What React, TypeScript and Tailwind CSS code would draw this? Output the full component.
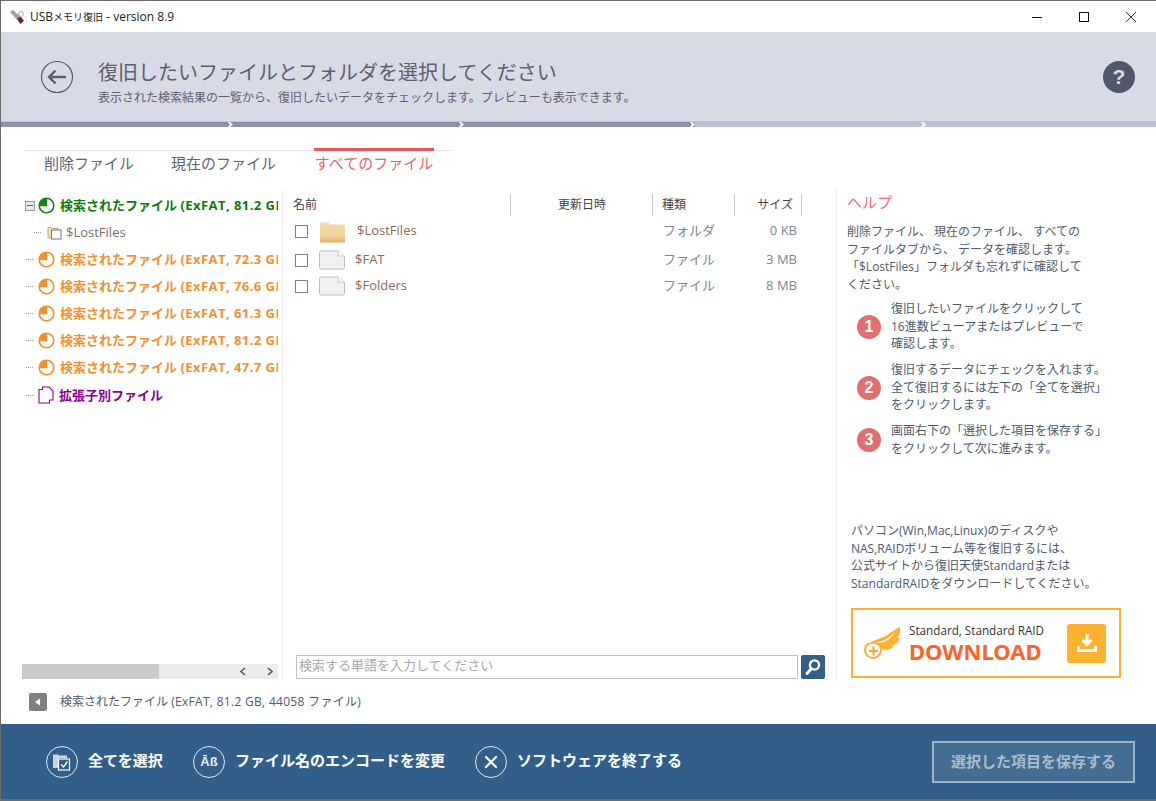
import React from "react";

const FONT = '"Open Sans","Noto Sans CJK JP",sans-serif';

function Pie({ color }: { color: string }) {
  return (
    <svg width="17" height="17" viewBox="0 0 17 17" className="shrink-0">
      <circle cx="8.5" cy="8.5" r="7.3" fill="none" stroke={color} strokeWidth="1.6" />
      <path d="M9.2 9.2V1.2H8.5A7.3 7.3 0 0 0 1.2 8.5V9.2Z" fill={color} />
    </svg>
  );
}

function Dots() {
  return <span className="w-[7px] h-px shrink-0 border-t border-dotted border-[#999]" />;
}

function TreeLabel({ size, color }: { size: string; color: string }) {
  return (
    <span className="font-bold text-[13px] leading-[27px]" style={{ color }}>
      検索されたファイル <span className="tracking-[0.45px]">(ExFAT, {size} GB</span>
    </span>
  );
}

function TreeRow({ size, color }: { size: string; color: string }) {
  return (
    <div className="h-[27px] flex items-center whitespace-nowrap">
      <span className="w-[16px] shrink-0 flex pl-[4px]"><Dots /></span>
      <span className="mr-[5px] flex"><Pie color={color} /></span>
      <TreeLabel size={size} color={color} />
    </div>
  );
}

function Check() {
  return <span className="w-[13px] h-[13px] shrink-0 border border-[#6f8296] bg-white" />;
}

function FileIcon() {
  return (
    <svg width="28" height="20" viewBox="0 0 28 20" className="shrink-0">
      <path d="M1.5 2.5A1.5 1.5 0 0 1 3 1H20L26.5 6V17.5A1.5 1.5 0 0 1 25 19H3A1.5 1.5 0 0 1 1.5 17.5Z" fill="#f1f1f1" stroke="#bdbdbd" />
      <path d="M20 1V6H26.5" fill="#fafafa" stroke="#c8c8c8" />
    </svg>
  );
}

function FolderIcon() {
  return (
    <svg width="27" height="22" viewBox="0 0 27 22" className="shrink-0">
      <defs>
        <linearGradient id="fg" x1="0" y1="0" x2="0" y2="1">
          <stop offset="0" stopColor="#f3dcae" />
          <stop offset="0.7" stopColor="#efd198" />
          <stop offset="1" stopColor="#e3ae58" />
        </linearGradient>
      </defs>
      <path d="M1 3.5C1 2 1.8 1.2 3 1.2H9L11 3.4H24.5C25.6 3.4 26 4 26 5V20C26 21 25.6 21.6 24.5 21.6H2.5C1.5 21.6 1 21 1 20Z" fill="url(#fg)" />
    </svg>
  );
}

function FileRow({ name, type, size, h, folder }: { name: string; type: string; size: string; h: string; folder?: boolean }) {
  const shift = folder ? "-mt-[2px]" : "";
  return (
    <div className={`flex items-center text-[13px] ${h}`}>
      <span className="w-[12px] shrink-0" />
      <Check />
      {folder ? (
        <span className="ml-[11px] mr-[11px] flex"><FolderIcon /></span>
      ) : (
        <span className="ml-[10px] mr-[9px] flex"><FileIcon /></span>
      )}
      <span className={`${folder ? "w-[306px]" : "w-[308px]"} shrink-0 text-[#8a6a55] ${shift}`}>{name}</span>
      <span className={`w-[76px] shrink-0 text-[#7c8694] text-[13px] ${shift}`}>{type}</span>
      <span className={`w-[58px] shrink-0 text-right text-[#7c8694] text-[13px] ${shift}`}>{size}</span>
    </div>
  );
}

function Step({ n, lines, h }: { n: number; lines: string[]; h: string }) {
  return (
    <div className={`flex items-center ${h}`}>
      <span className="w-[24px] h-[24px] ml-[10px] mr-[10px] shrink-0 rounded-full bg-[#e07070] text-white font-bold text-[16px] leading-[24px] text-center" style={{ fontFamily: '"Liberation Sans",sans-serif' }}>{n}</span>
      <div className="text-[12px] leading-[17.5px] text-[#4d5b6c] whitespace-nowrap">
        {lines.map((l) => <div key={l}>{l}</div>)}
      </div>
    </div>
  );
}

function RoundIcon({ children }: { children: React.ReactNode }) {
  return (
    <span className="w-[32px] h-[32px] shrink-0 rounded-full border border-[#dfe7ee] flex items-center justify-center">
      {children}
    </span>
  );
}

function Seg({ w, bg, chevron }: { w: string; bg: string; chevron?: boolean }) {
  return (
    <div className={`${w} ${bg} flex items-center justify-end`}>
      {chevron && (
        <svg width="5" height="5" viewBox="0 0 5 5"><path d="M0 0L2 0L5 2.5L2 5L0 5L2 2.5Z" fill="#fff" /></svg>
      )}
    </div>
  );
}

export default function App() {
  return (
    <div className="w-[1156px] h-[801px] bg-white flex flex-col overflow-hidden border-t-[1px] border-l-[1px] border-[#6b6b6b]" style={{ fontFamily: FONT }}>
      {/* title bar */}
      <div className="h-[31px] shrink-0 flex items-center">
        <svg width="16" height="16" viewBox="0 0 16 16" className="ml-[8px] mr-[5px] shrink-0">
          <path d="M1 3L4 1L13 9L10 13Z" fill="#9aa0a8" />
          <path d="M8 9L12 8L15 12L11 15Z" fill="#7a1d2a" />
          <circle cx="12" cy="5" r="2.4" fill="none" stroke="#aaa" />
        </svg>
        <span className="text-[12px] text-[#222] whitespace-nowrap">USB<span className="text-[10px]">メモリ復旧</span> - version 8.9</span>
        <div className="flex-1" />
        <div className="flex items-center gap-[37px] pr-[20px]">
          <svg width="10" height="10" viewBox="0 0 10 10"><path d="M0 5.5H10" stroke="#111" /></svg>
          <svg width="10" height="10" viewBox="0 0 10 10"><rect x="0.5" y="0.5" width="9" height="9" fill="none" stroke="#111" /></svg>
          <svg width="10" height="10" viewBox="0 0 10 10"><path d="M0 0L10 10M10 0L0 10" stroke="#111" strokeWidth="0.9" /></svg>
        </div>
      </div>

      {/* header */}
      <div className="h-[89px] shrink-0 bg-[#d8dae6] flex items-center">
        <svg width="34" height="34" viewBox="0 0 34 34" className="ml-[39px] mr-[24px] shrink-0">
          <circle cx="17" cy="17" r="15.5" fill="none" stroke="#5a5d6e" strokeWidth="1.2" />
          <path d="M26 17H9M15.5 10.5L9 17L15.5 23.5" fill="none" stroke="#5a5d6e" strokeWidth="2.4" />
        </svg>
        <div className="flex-1 mt-[10px]">
          <div className="text-[20px] leading-[29px] text-[#5d6070] whitespace-nowrap">復旧したいファイルとフォルダを選択してください</div>
          <div className="mt-[2px] text-[12px] leading-[17px] text-[#5d6070] whitespace-nowrap">表示された検索結果の一覧から、復旧したいデータをチェックします。プレビューも表示できます。</div>
        </div>
        <span className="w-[32px] h-[32px] mr-[21px] rounded-full bg-[#52566b] text-[#d8dae6] font-bold text-[21px] leading-[32px] text-center" style={{ fontFamily: '"Liberation Sans",sans-serif' }}>?</span>
      </div>

      {/* progress */}
      <div className="h-[6px] shrink-0 flex border-t border-[#c4c4cc]">
        <Seg w="w-[232px]" bg="bg-[#8e8fa8]" chevron />
        <Seg w="w-[231px]" bg="bg-[#8e8fa8]" chevron />
        <Seg w="w-[231px]" bg="bg-[#8e8fa8]" chevron />
        <Seg w="w-[231px]" bg="bg-[#bfc0d3]" chevron />
        <Seg w="flex-1" bg="bg-[#bfc0d3]" />
      </div>

      {/* tabs */}
      <div className="h-[62px] shrink-0 pl-[23px] pt-[21px]">
        <div className="w-[429px] h-[41px] flex relative">
          <div className="absolute left-0 right-0 top-[2px] h-px bg-[#e6e6e6]" />
          <div className="w-[147px] pl-[20px] pt-[4px] text-[15px] leading-[22px] text-[#5d6673] whitespace-nowrap">削除ファイル</div>
          <div className="w-[143px] pt-[4px] text-[15px] leading-[22px] text-[#5d6673] whitespace-nowrap">現在のファイル</div>
          <div className="w-[120px] relative border-t-[3px] border-[#e05c5c] pt-[1px] text-[15px] leading-[22px] text-[#e06565] text-center whitespace-nowrap">すべてのファイル</div>
        </div>
      </div>

      {/* panels */}
      <div className="h-[490px] shrink-0 flex">
        {/* tree */}
        <div className="w-[282px] shrink-0 pl-[21px] pr-[4px] pt-[3px] border-r border-[#ececec] flex flex-col">
          <div className="flex-1 overflow-hidden">
            <div className="h-[27px] flex items-center whitespace-nowrap">
              <span className="w-[16px] shrink-0 flex">
                <span className="w-[10px] h-[10px] ml-[3px] border border-[#9a9a9a] bg-[#e8e8ee] flex items-center justify-center">
                  <span className="w-[6px] h-px bg-[#3a5a9a]" />
                </span>
              </span>
              <span className="mr-[5px] flex"><Pie color="#148214" /></span>
              <TreeLabel size="81.2" color="#0e7a0e" />
            </div>
            <div className="h-[27px] flex items-center whitespace-nowrap">
              <span className="w-[12px] shrink-0" />
              <span className="w-[13px] shrink-0 flex"><Dots /></span>
              <svg width="15" height="15" viewBox="0 0 15 15" className="mr-[4px] shrink-0">
                <path d="M1 2.5H4.5L5.5 3.5H11V6H5V13H1Z" fill="#f2e2bd" stroke="#c5a866" />
                <rect x="4.5" y="5" width="9.5" height="9" fill="#fff" stroke="#66788c" />
              </svg>
              <span className="text-[13px] text-[#77706e]">$LostFiles</span>
            </div>
            {["72.3", "76.6", "61.3", "81.2", "47.7"].map((s, i) => (
              <TreeRow key={i} color="#f0902f" size={s} />
            ))}
            <div className="h-[28px] flex items-center whitespace-nowrap">
              <span className="w-[16px] shrink-0 flex pl-[4px]"><Dots /></span>
              <svg width="16" height="18" viewBox="0 0 16 18" className="mr-[5px] shrink-0">
                <path d="M4.5 1H11L15 5V14H4.5Z" fill="#fff" stroke="#8c008c" strokeWidth="1.1" />
                <path d="M4.5 3.5H1V17H11.5V14" fill="#fff" stroke="#8c008c" strokeWidth="1.1" />
              </svg>
              <span className="font-bold text-[13px] text-[#8c008c] leading-[27px]">拡張子別ファイル</span>
            </div>
          </div>
          <div className="h-[15px] shrink-0 bg-[#ececec] flex items-center">
            <div className="w-[137px] h-full bg-[#cbcbcb]" />
            <div className="flex-1" />
            <svg width="8" height="9" viewBox="0 0 8 9" className="mr-[19px]"><path d="M6 1L2 4.5L6 8" fill="none" stroke="#555" strokeWidth="1.6" /></svg>
            <svg width="8" height="9" viewBox="0 0 8 9" className="mr-[4px]"><path d="M2 1L6 4.5L2 8" fill="none" stroke="#555" strokeWidth="1.6" /></svg>
          </div>
        </div>

        {/* file list */}
        <div className="w-[554px] shrink-0 pt-[4px] border-r border-[#ececec] flex flex-col">
          <div className="h-[24px] shrink-0 flex items-center text-[12px] text-[#444]">
            <div className="w-[228px] h-[22px] pl-[10px] border-r border-[#c8c8c8] leading-[22px]">名前</div>
            <div className="w-[142px] h-[22px] pl-[47px] border-r border-[#c8c8c8] leading-[22px]">更新日時</div>
            <div className="w-[82px] h-[22px] pl-[9px] border-r border-[#c8c8c8] leading-[22px]">種類</div>
            <div className="w-[67px] h-[22px] pr-[8px] text-right border-r border-[#c8c8c8] leading-[22px]">サイズ</div>
          </div>
          <div className="flex-1 pt-[1px]">
            <FileRow folder name="$LostFiles" type="フォルダ" size="0 KB" h="h-[27px]" />
            <div className="h-[2px]" />
            <FileRow name="$FAT" type="ファイル" size="3 MB" h="h-[26px]" />
            <FileRow name="$Folders" type="ファイル" size="8 MB" h="h-[26px]" />
          </div>
          <div className="h-[24px] shrink-0 flex pl-[13px]">
            <div className="w-[502px] h-[24px] border border-[#c0c0c0] pl-[2px] text-[13px] leading-[18px] text-[#a8a8a8] whitespace-nowrap">検索する単語を入力してください</div>
            <div className="ml-[3px] w-[24px] h-[24px] rounded-[2px] bg-[#325f89] flex items-center justify-center">
              <svg width="18" height="18" viewBox="0 0 18 18">
                <circle cx="10.5" cy="7" r="4.6" fill="none" stroke="#fff" strokeWidth="2.4" />
                <path d="M7 11L3 15.5" stroke="#fff" strokeWidth="3" strokeLinecap="round" />
              </svg>
            </div>
          </div>
        </div>

        {/* help */}
        <div className="flex-1 pl-[10px] pt-[2px]">
          <div className="text-[15px] leading-[22px] text-[#e8707a]">ヘルプ</div>
          <div className="text-[12px] leading-[17.5px] text-[#4d5b6c] whitespace-nowrap mt-[10px]">
            <div>削除ファイル、 現在のファイル、 すべての</div>
            <div>ファイルタブから、 データを確認します。</div>
            <div>「$LostFiles」フォルダも忘れずに確認して</div>
            <div>ください。</div>
          </div>
          <div className="mt-[3px]">
            <Step n={1} h="h-[61px]" lines={["復旧したいファイルをクリックして", "16進数ビューアまたはプレビューで", "確認します。"]} />
            <Step n={2} h="h-[61px]" lines={["復旧するデータにチェックを入れます。", "全て復旧するには左下の「全てを選択」", "をクリックします。"]} />
            <Step n={3} h="h-[43px]" lines={["画面右下の「選択した項目を保存する」", "をクリックして次に進みます。"]} />
          </div>
          <div className="mt-[61px] ml-[4px] text-[12px] leading-[17.5px] text-[#4d5b6c] whitespace-nowrap">
            <div>パソコン(Win,Mac,Linux)のディスクや</div>
            <div>NAS,RAIDボリューム等を復旧するには、</div>
            <div>公式サイトから復旧天使Standardまたは</div>
            <div>StandardRAIDをダウンロードしてください。</div>
          </div>
          <div className="mt-[16px] ml-[4px] w-[270px] h-[70px] border-2 border-[#fdb22f] flex items-center">
            <svg width="38" height="34" viewBox="0 0 38 34" className="ml-[10px] mr-[8px] shrink-0">
              <path d="M17 20A8 8 0 1 1 6 17" fill="none" stroke="#fdb22f" strokeWidth="2" />
              <path d="M6 25H15M10.5 20.5V29.5" stroke="#f5a623" strokeWidth="2" />
              <path d="M4 20C8 13 19 14 27 7C30 5 34 2 37 1C38 6 36 10 33 12L37 12C35 17 32 19 28 20L31 20C28 24 23 25 19 23C15 18 9 16 4 20Z" fill="#fdb22f" />
              <path d="M12 17C19 16 27 12 32 6C29 12 21 18 12 17Z" fill="#fff" />
            </svg>
            <div className="w-[158px] shrink-0 whitespace-nowrap">
              <div className="text-[11.7px] leading-[15px] text-[#333]">Standard, Standard RAID</div>
              <div className="text-[22px] leading-[26px] font-bold text-[#ff6228]" style={{ fontFamily: '"Noto Sans",sans-serif' }}>DOWNLOAD</div>
            </div>
            <span className="w-[39px] h-[39px] rounded-[3px] bg-[#fdb22f] flex items-center justify-center shrink-0">
              <svg width="22" height="22" viewBox="0 0 22 22">
                <path d="M11 2V12M6.5 8L11 12.5L15.5 8" fill="none" stroke="#fff" strokeWidth="3" />
                <path d="M2.5 14V18.5H19.5V14" fill="none" stroke="#fff" strokeWidth="3" />
              </svg>
            </span>
          </div>
        </div>
      </div>

      {/* status */}
      <div className="h-[45px] shrink-0 flex items-center pl-[28px]">
        <span className="w-[18px] h-[18px] rounded-[2px] bg-[#808080] flex items-center justify-center">
          <svg width="8" height="8" viewBox="0 0 8 8"><path d="M6 0.5V7.5L1 4Z" fill="#fff" /></svg>
        </span>
        <span className="ml-[13px] text-[12px] text-[#4d5b6c] whitespace-nowrap">検索されたファイル <span className="tracking-[0.3px]">(ExFAT, 81.2 GB, 44058 ファイル)</span></span>
      </div>

      {/* footer */}
      <div className="h-[75px] shrink-0 bg-[#325f89] flex items-center pl-[45px] pr-[21px] text-white font-bold text-[15px] whitespace-nowrap">
        <RoundIcon>
          <svg width="20" height="20" viewBox="0 0 20 20">
            <path d="M1 4.5V2.5H6L7 3.5H15V6H6V16H1Z" fill="#c9d6e2" />
            <rect x="6.5" y="7" width="11" height="11" fill="none" stroke="#fff" strokeWidth="1.2" />
            <path d="M9 12.5L11.5 15L15.5 9.5" fill="none" stroke="#fff" strokeWidth="1.4" />
          </svg>
        </RoundIcon>
        <span className="ml-[10px] w-[105px] -mt-[2px]">全てを選択</span>
        <RoundIcon>
          <span className="text-[13px] leading-none text-[#e6edf3]" style={{ fontFamily: '"Liberation Sans",sans-serif' }}>Āß</span>
        </RoundIcon>
        <span className="ml-[10px] w-[240px] -mt-[2px]">ファイル名のエンコードを変更</span>
        <RoundIcon>
          <svg width="14" height="14" viewBox="0 0 14 14"><path d="M2 2L12 12M12 2L2 12" stroke="#fff" strokeWidth="2.2" strokeLinecap="round" /></svg>
        </RoundIcon>
        <span className="ml-[10px] -mt-[2px]">ソフトウェアを終了する</span>
        <div className="flex-1" />
        <div className="w-[203px] h-[42px] border-2 border-[#9fb4c8] bg-[#436d92] text-[#a9bccd] text-center leading-[36px]">選択した項目を保存する</div>
      </div>
      <div className="h-[2px] shrink-0 bg-[#6b6b6b]" />
    </div>
  );
}
